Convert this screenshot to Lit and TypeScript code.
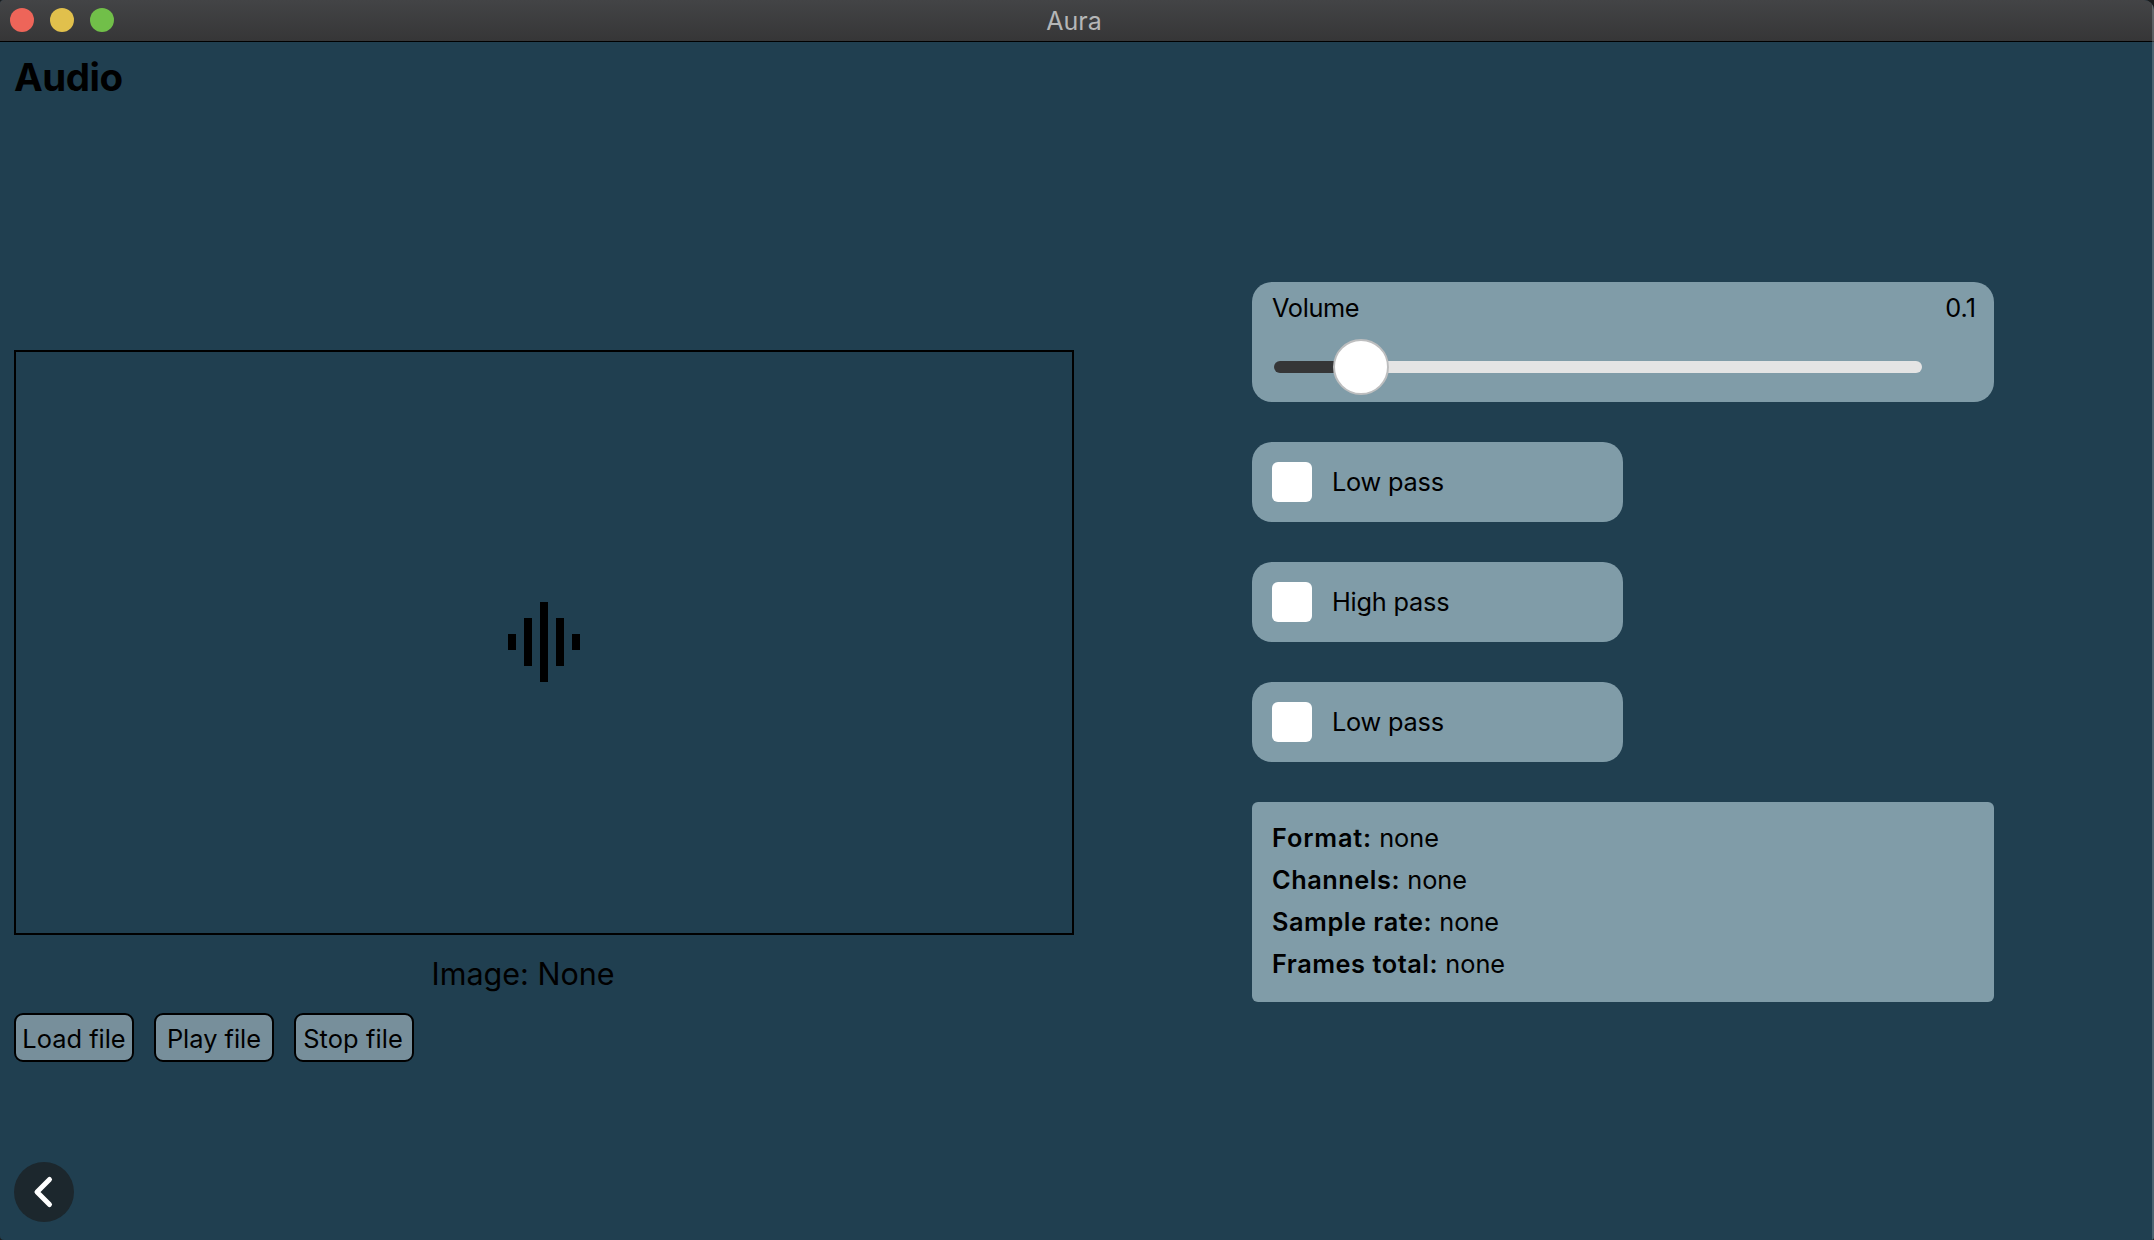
import { LitElement, html, css } from "lit";
import { customElement } from "lit/decorators.js";

@customElement("app-root")
export class AppRoot extends LitElement {
  static styles = css`
    :host {
      display: block;
      height: 1240px;
      font-family: Inter, "Liberation Sans", sans-serif;
      color: #000;
      background: #1b1c1d;
    }
    * { box-sizing: border-box; }
    .window {
      height: 1240px;
      display: flex;
      flex-direction: column;
      background: #203f50;
      border-radius: 4px 10px 3px 4px;
      overflow: hidden;
      position: relative;
    }
    .window::after {
      content: "";
      position: absolute;
      top: 0;
      right: 0;
      bottom: 0;
      width: 2px;
      background: rgba(160, 170, 175, 0.35);
    }
    .titlebar {
      height: 42px;
      flex: none;
      display: grid;
      grid-template-columns: 1fr auto 1fr;
      align-items: center;
      padding: 0 16px 1px 10px;
      background: linear-gradient(#434446, #363637);
      border-bottom: 1px solid #000;
    }
    .lights { display: flex; gap: 16px; padding-bottom: 1px; }
    .light { width: 24px; height: 24px; border-radius: 50%; }
    .close { background: #ee6559; }
    .minimise { background: #e1c04c; }
    .zoom { background: #71bf49; }
    .title { font-size: 25px; line-height: 38px; color: #b5b6b7; padding-top: 2px; }
    .page {
      flex: 1;
      display: flex;
      flex-direction: column;
      padding: 13px 14px 18px;
    }
    h1 {
      margin: 0 0 1px;
      font-size: 38.5px;
      line-height: 44px;
      font-weight: 700;
      letter-spacing: -0.5px;
    }
    .columns {
      flex: 1;
      display: grid;
      grid-template-columns: 1060px 742px;
      column-gap: 178px;
      align-items: start;
    }
    .player { padding-top: 250px; }
    .display {
      height: 585px;
      border: 2px solid #000;
      padding-bottom: 1px;
      display: grid;
      place-items: center;
    }
    .display svg { display: block; }
    .caption {
      margin: 19px 0 19px;
      font-size: 30.5px;
      line-height: 40px;
      padding-right: 42px;
      text-align: center;
    }
    .actions { display: flex; gap: 20px; }
    button {
      font: inherit;
      color: inherit;
      margin: 0;
      padding: 0;
    }
    .action {
      width: 120px;
      height: 49px;
      border: 2px solid #000;
      border-radius: 9px;
      background: #778f9b;
      font-size: 25.4px;
      line-height: 47px;
      white-space: nowrap;
      display: flex;
      justify-content: center;
    }
    .action:last-child { letter-spacing: 0.1px; padding-right: 2px; }
    .controls {
      padding-top: 182px;
      display: flex;
      flex-direction: column;
      gap: 40px;
      font-size: 25.3px;
      line-height: 32px;
    }
    .panel { background: #809ca8; border-radius: 20px; }
    .volume { height: 120px; padding: 10px 18px 0 20px; }
    .readout { display: flex; justify-content: space-between; }
    .readout .name { letter-spacing: -0.35px; }
    .slider {
      width: 648px;
      height: 56px;
      margin: 15px 0 0 2px;
      display: flex;
      align-items: center;
    }
    .played { width: 60px; height: 12px; border-radius: 6px 0 0 6px; background: #353637; }
    .handle {
      width: 56px;
      height: 56px;
      margin: 0 -1px;
      border: 2px solid #bdbebf;
      border-radius: 50%;
      background: #fff;
      z-index: 1;
    }
    .rest { flex: 1; height: 12px; border-radius: 0 6px 6px 0; background: #e4e4e4; }
    .filter {
      width: 371px;
      height: 80px;
      padding: 0 20px;
      display: flex;
      align-items: center;
      gap: 20px;
      letter-spacing: -0.2px;
    }
    .box { width: 40px; height: 40px; border-radius: 6px; background: #fff; }
    .info {
      height: 200px;
      border-radius: 6px;
      padding: 15px 20px;
      line-height: 42px;
    }
    .info b { font-weight: 600; letter-spacing: 0.55px; }
    .info .fact:first-child b { letter-spacing: 0.85px; }
    .back {
      width: 60px;
      height: 60px;
      border: 0;
      border-radius: 50%;
      background: #1c272d;
      display: grid;
      place-items: center;
    }
  `;

  private filters = ["Low pass", "High pass", "Low pass"];
  private actions = ["Load file", "Play file", "Stop file"];
  private facts = ["Format:", "Channels:", "Sample rate:", "Frames total:"];

  render() {
    return html`
      <div class="window">
        <header class="titlebar">
          <div class="lights">
            <span class="light close"></span>
            <span class="light minimise"></span>
            <span class="light zoom"></span>
          </div>
          <span class="title">Aura</span>
        </header>
        <main class="page">
          <h1><span>Audio</span></h1>
          <div class="columns">
            <section class="player">
              <div class="display">
                <svg width="80" height="80" viewBox="0 0 20 20">
                  <path d="M1 8h2v4H1zM5 4h2v12H5zM9 0h2v20H9zM13 4h2v12h-2zM17 8h2v4h-2z" />
                </svg>
              </div>
              <div class="caption"><span>Image: None</span></div>
              <div class="actions">
                ${this.actions.map((a) => html`<button class="action"><span>${a}</span></button>`)}
              </div>
            </section>
            <section class="controls">
              <div class="panel volume">
                <div class="readout"><span class="name">Volume</span><span>0.1</span></div>
                <div class="slider">
                  <span class="played"></span><span class="handle"></span><span class="rest"></span>
                </div>
              </div>
              ${this.filters.map(
                (f) => html`<label class="panel filter"><span class="box"></span><span>${f}</span></label>`
              )}
              <div class="panel info">
                ${this.facts.map((f) => html`<div class="fact"><b>${f}</b> <span>none</span></div>`)}
              </div>
            </section>
          </div>
          <button class="back" aria-label="Back">
            <svg width="60" height="60" viewBox="0 0 60 60" fill="none" stroke="#fff" stroke-width="5" stroke-linecap="round" stroke-linejoin="round">
              <path d="M35.5 17.5 23 30l12.500 12.500" />
            </svg>
          </button>
        </main>
      </div>
    `;
  }
}
